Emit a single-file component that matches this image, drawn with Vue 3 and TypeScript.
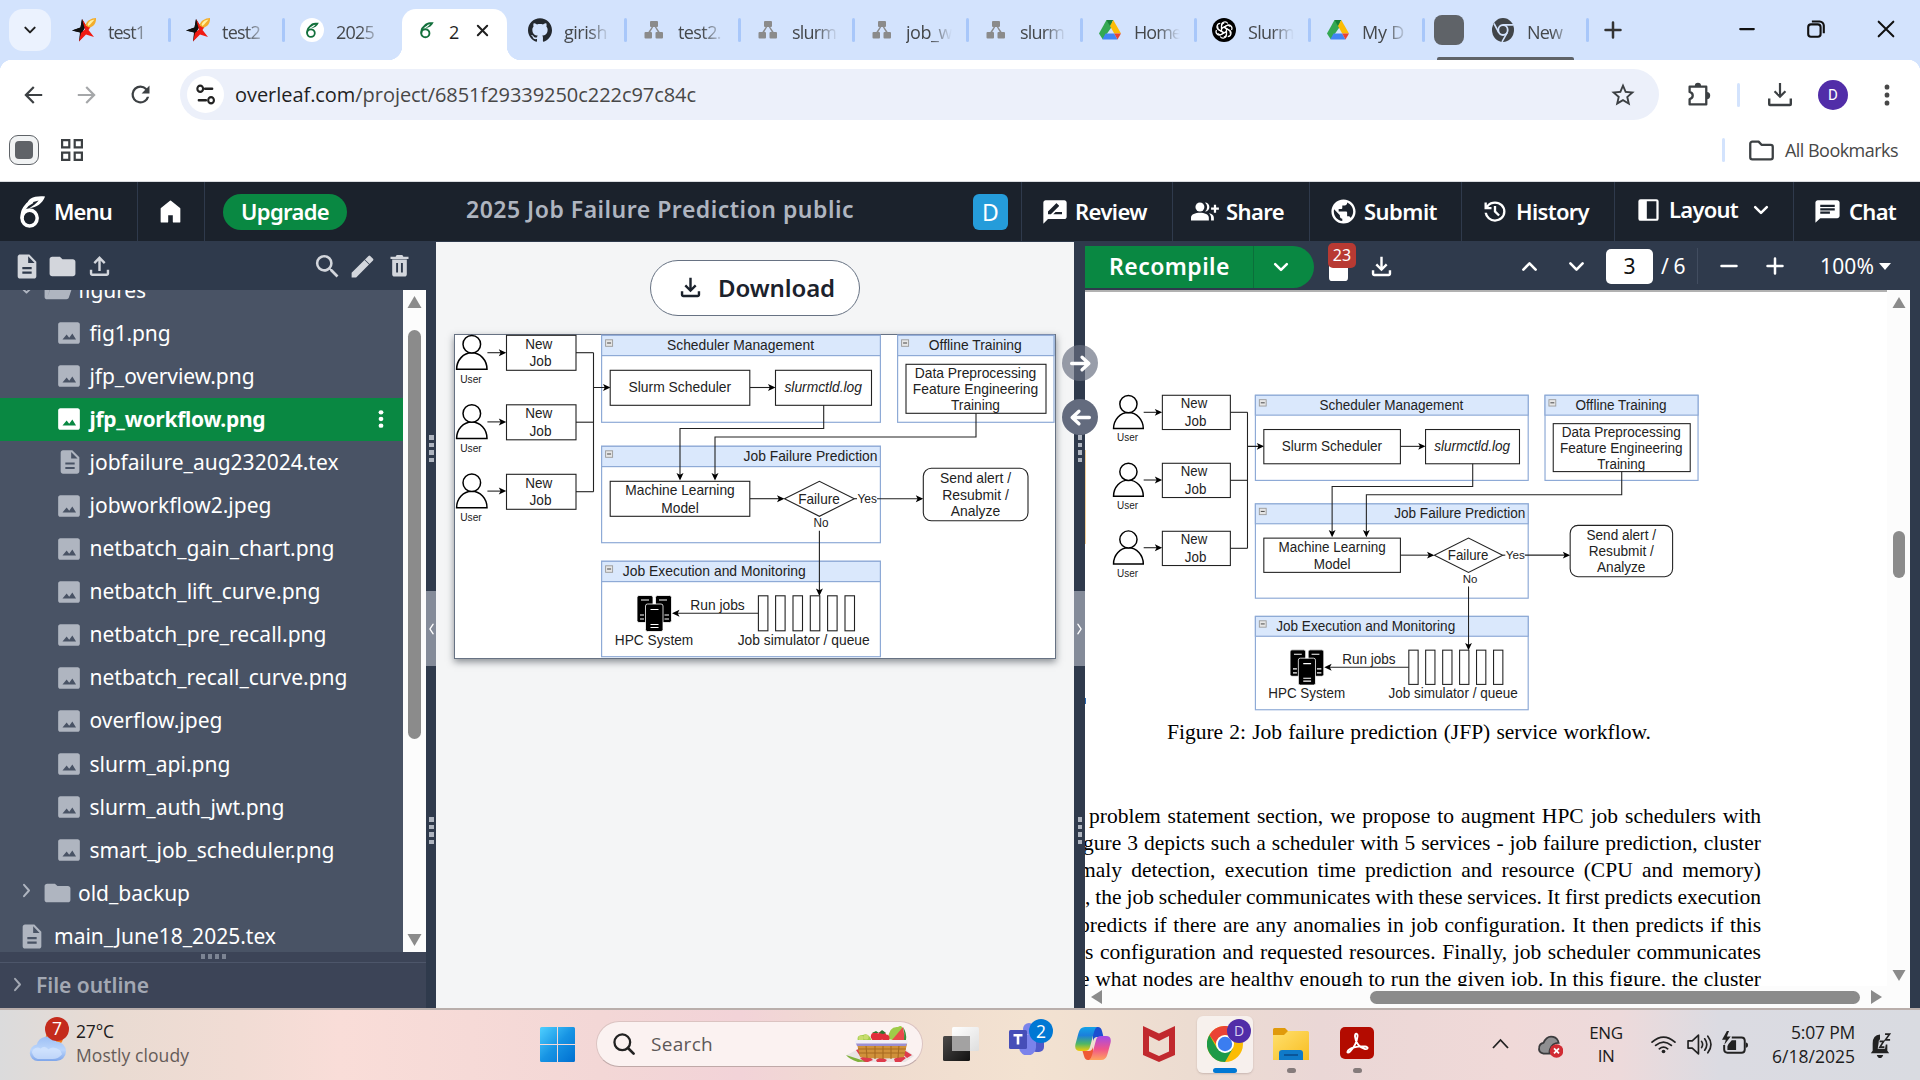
<script setup lang="ts">
import { h } from 'vue'
import type { Directive, FunctionalComponent } from 'vue'

/* Spreads the letters (or, with the argument "word", the words) of a label so that it fills the given width. */
const vFit: Directive<HTMLElement, number> = {
  mounted(el, binding) {
    const range = document.createRange()
    range.selectNodeContents(el)
    const natural = range.getBoundingClientRect().width
    const text = (el.textContent ?? '').trim()
    if (!natural || !text) return
    if (binding.arg === 'word') {
      const gaps = text.split(' ').length - 1
      if (gaps) el.style.wordSpacing = `${((binding.value - natural) / gaps).toFixed(3)}px`
    } else {
      el.style.letterSpacing = `${((binding.value - natural) / text.length).toFixed(3)}px`
    }
  },
}

const p = (d: string) => `<path fill="currentColor" fill-rule="evenodd" d="${d}"/>`
const s = (d: string, w = 2) =>
  `<path fill="none" stroke="currentColor" stroke-width="${w}" stroke-linecap="round" stroke-linejoin="round" d="${d}"/>`

const leaf =
  '<ellipse cx="10.2" cy="16.3" rx="5.7" ry="5.6" fill="none" stroke="currentColor" stroke-width="2.6"/>' +
  '<path fill="none" stroke="currentColor" stroke-width="2.6" d="M4.6 16.5C4.2 11 7.500 6.600 12.500 4.400"/>' +
  '<path fill="currentColor" d="M8.300 7.400C8.400 2.500 13.500.4 21.800 1.100C19.800 6 15.500 8.900 10 9.300C13 7.600 15.300 6 17 3.900C14.500 4.400 11.500 5.200 8.300 7.400Z"/>'

const icons: Record<string, string> = {
  chevDown: s('M5 8.500l7 7 7-7', 3),
  chevUp: s('M5 15.500l7-7 7 7', 3),
  chevRight: s('M8.500 4l7 8-7 8', 2.800),
  chevLeft: s('M15.500 4l-7 8 7 8', 2.800),
  back: p('M20.500 11H7.830l5.590-5.590L12 4l-8 8 8 8 1.410-1.410L7.830 13H20.500v-2z'),
  forward: p('M12 4l-1.410 1.410L16.170 11H3.500v2h12.670l-5.580 5.590L12 20l8-8z'),
  reload: p('M17.650 6.350A7.960 7.960 0 0 0 12 4a8 8 0 1 0 7.730 10h-2.080A6 6 0 1 1 12 6c1.660 0 3.140.69 4.220 1.780L13 11h7V4l-2.350 2.350z'),
  tune: s('M11.500 6.500H19M5 17.500h7.500', 2.400) + '<circle cx="6.500" cy="6.500" r="3" fill="none" stroke="currentColor" stroke-width="2.200"/><circle cx="17.800" cy="17.500" r="3" fill="none" stroke="currentColor" stroke-width="2.200"/>',
  star: p('M22 9.240l-7.190-.62L12 2 9.190 8.630 2 9.240l5.460 4.730L5.820 21 12 17.270 18.180 21l-1.630-7.030L22 9.240zM12 15.400l-3.760 2.270 1-4.280-3.320-2.880 4.380-.38L12 6.100l1.710 4.040 4.380.38-3.320 2.880 1 4.280L12 15.400z'),
  puzzle: '<path fill="none" stroke="currentColor" stroke-width="2.200" stroke-linejoin="round" d="M2.500 4.500H18.500V21.500H2.500V16.500C6.500 15.500 6.500 10.500 2.500 9.500Z"/><path fill="currentColor" d="M7.500 4a3 3.200 0 0 1 6 0zM19 9.500a3 3.200 0 0 1 0 7z"/>',
  download: p('M12 16l-5-5 1.400-1.450 2.600 2.600V4h2v8.150l2.600-2.600L17 11l-5 5Zm-6 4c-1.100 0-2-.9-2-2v-3h2v3h12v-3h2v3c0 1.100-.9 2-2 2H6Z'),
  downloadWide: p('M10.900 0h2.200v11l3.600-3.600 1.500 1.500L12 15.200 5.800 8.900l1.500-1.500 3.600 3.600ZM0 15.500h2.400v5.200h19.200v-5.200H24v5.700a2 2 0 0 1-2 2H2a2 2 0 0 1-2-2Z'),
  upload: p('M11 16V7.850l-2.600 2.600L7 9l5-5 5 5-1.400 1.450-2.600-2.600V16h-2ZM6 20c-1.100 0-2-.9-2-2v-3h2v3h12v-3h2v3c0 1.100-.9 2-2 2H6Z'),
  more: '<g fill="currentColor"><circle cx="12" cy="4" r="2.600"/><circle cx="12" cy="12" r="2.600"/><circle cx="12" cy="20" r="2.600"/></g>',
  grid: '<g fill="none" stroke="currentColor" stroke-width="2.200"><path d="M2.100 2.100h7.200v7.200H2.100zM14.700 2.100h7.200v7.200h-7.200zM2.100 14.700h7.200v7.200H2.100zM14.700 14.700h7.200v7.200h-7.200z"/></g>',
  folderLine: '<path fill="none" stroke="currentColor" stroke-width="2.200" stroke-linejoin="round" d="M1.200 5.500a2 2 0 0 1 2-2h6l2.800 3h8.800a2 2 0 0 1 2 2v10a2 2 0 0 1-2 2H3.200a2 2 0 0 1-2-2z"/>',
  leaf,
  home: '<path fill="currentColor" stroke="currentColor" stroke-width="1.500" stroke-linejoin="round" d="M4 21V9.500L12 3l8 6.500V21h-5.200v-6.500H9.200V21z"/>',
  review: p('M20 2H4c-1.100 0-2 .9-2 2v18l4-4h14c1.100 0 2-.9 2-2V4c0-1.100-.9-2-2-2zM6 14v-2.470l6.880-6.880c.2-.2.510-.2.710 0l1.770 1.770c.2.2.2.510 0 .710L8.470 14H6zm12 0h-7.500l2-2H18v2z'),
  share: '<g fill="currentColor"><circle cx="8" cy="8" r="4"/><path d="M0 20v-2.500C0 14.500 4 13.200 8 13.200s8 1.300 8 4.300V20zM12.500 12a5 5 0 0 0 0-8 4 4 0 1 1 0 8zM16 13.600c2.700.5 4.500 1.800 4.500 4V20H18v-2.500c0-1.500-.7-2.900-2-3.900z"/><path d="M20.500 6h2v2.500H25v2h-2.500V13h-2v-2.500H18v-2h2.500z"/></g>',
  globe: p('M12 2C6.480 2 2 6.480 2 12s4.480 10 10 10 10-4.480 10-10S17.520 2 12 2zm-1 17.930c-3.950-.49-7-3.850-7-7.930 0-.62.08-1.210.21-1.790L9 15v1c0 1.100.9 2 2 2v1.930zm6.900-2.540c-.26-.81-1-1.390-1.900-1.390h-1v-3c0-.55-.45-1-1-1H8v-2h2c.55 0 1-.45 1-1V7h2c1.100 0 2-.9 2-2v-.41c2.930 1.190 5 4.060 5 7.410 0 2.080-.8 3.970-2.100 5.390z'),
  history: p('M12 21q-3.450 0-6.012-2.287T3.050 13H5.100q.35 2.600 2.313 4.300T12 19q2.925 0 4.963-2.037T19 12t-2.037-4.962T12 5q-1.725 0-3.225.8T6.250 8H9v2H3V4h2v2.350q1.275-1.600 3.113-2.475T12 3q1.875 0 3.513.713t2.850 1.924 1.925 2.850T21 12t-.712 3.513-1.925 2.850-2.850 1.925T12 21m2.800-4.800L11 12.400V7h2v4.600l3.200 3.200z'),
  layout: p('M5 2h14a2 2 0 0 1 2 2v16a2 2 0 0 1-2 2H5a2 2 0 0 1-2-2V4a2 2 0 0 1 2-2zM10.500 4v16h8.500V4z'),
  chat: p('M20 2H4c-1.100 0-1.990.9-1.990 2L2 22l4-4h14c1.100 0 2-.9 2-2V4c0-1.100-.9-2-2-2zM6 9h12v2H6V9zm8 5H6v-2h8v2zm4-6H6V6h12v2z'),
  file: p('M14 2H6c-1.100 0-2 .9-2 2v16c0 1.100.9 2 2 2h12c1.100 0 2-.9 2-2V8l-6-6zm2 16H8v-1.800h8V18zm0-3.800H8v-1.800h8v1.800zM13 9V3.500L18.500 9H13z'),
  folder: p('M10 4H4c-1.100 0-2 .9-2 2v12c0 1.100.9 2 2 2h16c1.100 0 2-.9 2-2V8c0-1.100-.9-2-2-2h-8l-2-2z'),
  folderOpen: p('M4 20c-1.100 0-2-.9-2-2V6c0-1.100.9-2 2-2h6l2 2h8c1.100 0 2 .9 2 2H7.500L4 18.500 6.800 9.500h16.700l-2.700 9c-.3.900-.9 1.500-1.900 1.500z'),
  search: p('M15.500 14h-.79l-.28-.27A6.470 6.470 0 0 0 16 9.500 6.500 6.500 0 1 0 9.500 16c1.610 0 3.090-.59 4.230-1.570l.27.28v.79l5 4.990L20.490 19l-4.990-5zm-6 0C7.010 14 5 11.990 5 9.500S7.010 5 9.500 5 14 7.010 14 9.500 11.990 14 9.500 14z'),
  edit: p('M3 17.250V21h3.750L17.810 9.940l-3.750-3.750L3 17.250zM20.710 7.040a1 1 0 0 0 0-1.410l-2.340-2.340a1 1 0 0 0-1.410 0l-3.300 3.300 3.750 3.750z'),
  trash: p('M5.500 19c0 1.100.9 2 2 2h9c1.100 0 2-.9 2-2V6.500h-13zM20 4h-4.500l-1-1.500h-5L8.500 4H4v2h16zM9 9.500h1.700v8H9zM13.300 9.500H15v8h-1.700z'),
  image: p('M22 20V4c0-1.100-.9-2-2-2H4c-1.100 0-2 .9-2 2v16c0 1.100.9 2 2 2h16c1.100 0 2-.9 2-2zM6 18l3.800-4.700 2.400 3 2.900-3.900L18.500 18z'),
  minus: s('M3 12h18', 3),
  plus: s('M3 12h18M12 3v18', 3),
  close: s('M4.500 4.500l15 15M19.500 4.500l-15 15', 3.200),
  winClose: s('M4 4l16 16M20 4L4 20', 2.200),
  restore: '<g fill="none" stroke="currentColor" stroke-width="2.300"><rect x="3.500" y="7" width="13.500" height="13.500" rx="3"/><path d="M7.500 3.800h8.500a4.500 4.500 0 0 1 4.500 4.500v8.200"/></g>',
  circleArrowR: s('M3.500 12H20M13.500 6l6.500 6-6.500 6', 3.200),
  circleArrowL: s('M20.500 12H4M10.500 6L4 12l6.500 6', 3.200),
  latex: '<path fill="#111" d="M0 12.500 8.500 9.500 10 1l4.500 7.500L11 12l1 5-5 6.500 1-9z"/><path fill="#f01a12" d="M10 1l4.500 7L21 5l-4.500 7 5.500 7-8-2.500-7 7 2-9 4-3z"/><path fill="#111" d="M0 12.500l8.500-3L10 1l2 10.500-3.500 4L7 23.500l1.500-9z"/><path fill="#f3ad2b" d="M13.500 7.500C15 2 19 .5 24 0c.3 4-1.500 8.500-7 9.500z"/><path fill="#fff0a0" d="M15.500 6.500C17 3.200 19.500 2 22.500 1.600 20.500 4 19 6 16.500 8z"/>',
  leafCircle: `<circle cx="12" cy="12" r="12" fill="#fff"/><g color="#13703c" transform="translate(4 4) scale(.68)">${leaf}</g>`,
  leafTab: `<g color="#13703c" transform="translate(4 3.500) scale(.72)">${leaf}</g>`,
  github: '<path fill="#24292f" d="M12 .297c-6.630 0-12 5.373-12 12 0 5.303 3.438 9.800 8.205 11.385.6.113.82-.258.82-.577 0-.285-.01-1.040-.015-2.040-3.338.724-4.042-1.610-4.042-1.610C4.422 18.070 3.633 17.700 3.633 17.700c-1.087-.744.084-.729.084-.729 1.205.084 1.838 1.236 1.838 1.236 1.070 1.835 2.809 1.305 3.495.998.108-.776.417-1.305.76-1.605-2.665-.3-5.466-1.332-5.466-5.930 0-1.310.465-2.380 1.235-3.220-.135-.303-.54-1.523.105-3.176 0 0 1.005-.322 3.300 1.230.96-.267 1.980-.399 3-.405 1.020.006 2.040.138 3 .405 2.280-1.552 3.285-1.230 3.285-1.230.645 1.653.24 2.873.12 3.176.765.84 1.230 1.910 1.230 3.220 0 4.610-2.805 5.625-5.475 5.920.42.36.81 1.096.81 2.220 0 1.606-.015 2.896-.015 3.286 0 .315.21.69.825.57C20.565 22.092 24 17.592 24 12.297c0-6.627-5.373-12-12-12"/>',
  nodes: '<g fill="#8b8b8b"><rect x="8" y="3" width="8" height="6" rx="1"/><rect x="2.500" y="14" width="7.500" height="6.500" rx="1"/><rect x="13.500" y="14" width="7.500" height="6.500" rx="1"/><path d="M9.700 9h1.500L8 14.500H6zM12.800 9h1.500l3.700 5.500h-2z"/></g>',
  drive: '<path fill="#34a853" d="M8.500 2h4l2.800 4.700L4.800 21.400 1 15.500z"/><path fill="#188038" d="M8.500 2h6.800L12 8z"/><path fill="#fbbc04" d="M15.300 2 23 15.500h-6.800L12 8z"/><path fill="#4285f4" d="M7.600 15.500h8.600l3.300 6.100H5.100L4.500 21z"/><path fill="#ea4335" d="M16.200 15.500H23l-3.500 6.100z"/>',
  gpt: '<circle cx="12" cy="12" r="12" fill="#000"/><g fill="none" stroke="#fff" stroke-width="1.200">' +
    [0, 60, 120, 180, 240, 300].map((a) => `<path transform="rotate(${a} 12 12)" d="M9.500 12.800V7.200a3.400 3.400 0 0 1 6.300-1.700M9.500 10.600l4.800-2.800a3.300 3.300 0 0 1 4 .8"/>`).join('') + '</g>',
  chromeGray: '<circle cx="12" cy="12" r="11" fill="#414549"/><circle cx="12" cy="12" r="4.700" fill="none" stroke="#d3e3fd" stroke-width="1.800"/><path fill="none" stroke="#d3e3fd" stroke-width="1.600" d="M12 7.200h10M7.800 14.400 3 6M16.200 14.400 11 23"/>',
  logs: p('M3 0h18a3 3 0 0 1 3 3v18a3 3 0 0 1-3 3H3a3 3 0 0 1-3-3V3a3 3 0 0 1 3-3zM6 4v9h12V4z'),
  weather: '<defs><linearGradient id="cl" x1="0" y1="0" x2="0" y2="1"><stop offset="0" stop-color="#9dbff5"/><stop offset=".55" stop-color="#bcd6fb"/><stop offset="1" stop-color="#7ea5ea"/></linearGradient></defs><circle cx="26" cy="12" r="9" fill="#f47b1c"/><path fill="url(#cl)" d="M9 36a8.500 8.500 0 0 1-1-16.900A11 11 0 0 1 28 16a10 10 0 0 1 0 20z"/><path fill="#d5e5fd" opacity=".7" d="M3 27a6 6 0 0 1 9-4q4-4 8 1 5-4 12 1l2 4q-4 5-10 5H9q-5-2-6-7z"/>',
  win: '<defs><linearGradient id="wg" x1="0" y1="0" x2="1" y2="1"><stop offset="0" stop-color="#4fd0ff"/><stop offset=".5" stop-color="#1794e4"/><stop offset="1" stop-color="#006fd0"/></linearGradient></defs><path fill="url(#wg)" d="M1.500 0H17v17H0V1.500A1.500 1.500 0 0 1 1.500 0zM18 0h15.500A1.500 1.500 0 0 1 35 1.500V17H18zM0 18h17v17H1.500A1.500 1.500 0 0 1 0 33.500zM18 18h17v15.500a1.500 1.500 0 0 1-1.500 1.500H18z"/>',
  lens: '<circle cx="9.700" cy="9.700" r="8.200" fill="none" stroke="#222" stroke-width="2.400"/><path d="M15.600 15.600 21.500 21.500" stroke="#222" stroke-width="2.800" stroke-linecap="round"/>',
  basket: '<path fill="#e9e4e4" d="M1 29 14 22h44l10 8-9 6H12z"/><path fill="#de3b4c" d="M10 24l6-2 4 5-6 3zM14 32l8-3 5 5-5 2H18zM58 24l8 5-5 3-6-5zM48 33l7-4 5 3-5 4h-6zM30 34l5-3 6 3-2 2h-8z"/><path fill="#7fb13c" d="M0 29l20 6.500-8 .5Q3 33 0 29z"/><path fill="#d0913a" d="M11 18h50l-3 13q-22 3-44 0z"/><path fill="none" stroke="#a66a20" stroke-width="1.100" d="M12 23h48M13 27h46M20 19l1 13M29 19v14M37 19v14M45 19v14M53 19l-1 13"/><path fill="#9fcb48" d="M12 15Q10 9 17 9q4-2 7 2l2 4zM42 13Q43 0 52 1q4-3 5 3l-4 11z"/><g fill="#c8dc6e"><circle cx="15" cy="12" r="2.600"/><circle cx="20" cy="11" r="2.600"/></g><g fill="#e0303b"><circle cx="29" cy="10.500" r="4.200"/><circle cx="36" cy="9.500" r="4.200"/><circle cx="40" cy="12" r="3.500"/><circle cx="32" cy="13" r="3.500"/></g><path fill="#2c7a32" d="M26 7l4-2 3 2 3-3 4 3-3 1-4-1z"/><path fill="#e84a4a" d="M46 14 57 1l2 13z"/><path fill="#3d8f3a" d="M57 1q4 6 3 13h-2q1-7-1-13z"/><rect x="9" y="14" width="53" height="4" rx="1.500" fill="#f1eff5"/><path fill="#9c8fd1" d="M10 17.500h51l-1 2.500H11z"/>',
  taskView: '<defs><linearGradient id="tk" x1="0" y1="0" x2="1" y2="1"><stop offset="0" stop-color="#4c4a49"/><stop offset="1" stop-color="#111"/></linearGradient><linearGradient id="tw" x1="0" y1="0" x2="1" y2="1"><stop offset="0" stop-color="#fff"/><stop offset="1" stop-color="#dedede"/></linearGradient></defs><rect y="9" width="27" height="25" rx="1.500" fill="url(#tk)"/><rect x="9" width="27" height="24" rx="1.500" fill="url(#tw)"/><path fill="#a3a2a2" d="M9 9h18v15H9z"/>',
  teams: '<circle cx="20" cy="6" r="6" fill="#7b83eb"/><rect x="22" y="11" width="13" height="18" rx="5" fill="#5059c9"/><path fill="#7b83eb" d="M9 12h18v11a8.500 8.500 0 0 1-17 2z"/><rect y="7" width="18" height="19" rx="1.500" fill="#464eb8"/><path stroke="#fff" stroke-width="2.600" fill="none" d="M4.500 12.200h9M9 12.200v9.300"/>',
  copilot: '<defs><linearGradient id="c1" x1="0" y1="0" x2="0" y2="1"><stop offset="0" stop-color="#13a3e8"/><stop offset=".35" stop-color="#1b7fdb"/><stop offset=".7" stop-color="#4fb765"/><stop offset="1" stop-color="#f2cb08"/></linearGradient><linearGradient id="c2" x1="0" y1="0" x2="0" y2="1"><stop offset="0" stop-color="#a34be8"/><stop offset=".55" stop-color="#f0558a"/><stop offset="1" stop-color="#ffa45e"/></linearGradient></defs><path fill="#1c4fd0" d="M18 0h5q3 0 4 4l1.500 6H22q-3 0-4 4z"/><path fill="#ef5a35" d="M18 33h-5q-3 0-4-4l-1.500-5H14q3 0 4-4z"/><path fill="url(#c1)" d="M10 0h12q-2 1-3 5l-4 15q-1 4-5 4H5q-6 0-4.500-7l3-11Q5 0 10 0z"/><path fill="url(#c2)" d="M26 33H14q2-1 3-5l4-15q1-4 5-4h5q6 0 4.500 7l-3 11Q31 33 26 33z"/>',
  mcafee: '<path fill="#c1292e" fill-rule="evenodd" d="M0 0 16 7.500 32 0v29L16 36 0 29zM6 10v15.500l10 4.500 10-4.500V10l-10 5z"/>',
  chrome: '<circle cx="18" cy="18" r="18" fill="#fbbc04"/><path fill="#ea4335" d="M2.400 9A18 18 0 0 1 33.600 9H18q-8 1-9 9z"/><path fill="#1e9a48" d="M2.400 9 10.200 22.500 18 27l7.800-4.500L18 36A18 18 0 0 1 2.400 9z"/><circle cx="18" cy="18" r="9" fill="#fff"/><circle cx="18" cy="18" r="7.200" fill="#3b7df0"/>',
  explorer: '<defs><linearGradient id="ex" x1="0" y1="0" x2="1" y2="1"><stop offset="0" stop-color="#ffe06d"/><stop offset="1" stop-color="#f8bd22"/></linearGradient></defs><path fill="#e09a0b" d="M0 1.500A1.500 1.500 0 0 1 1.500 0H12l3 3v5H0z"/><path fill="url(#ex)" d="M0 7h11l4-4h19.500A1.500 1.500 0 0 1 36 4.500V32H0z"/><path fill="#0f7ac8" d="M6 32v-7q0-3 3-3h18q3 0 3 3v7z"/><path stroke="#0a4c8c" stroke-width="1.600" d="M11 27h14"/>',
  acrobat: '<rect width="34" height="32" rx="5" fill="#b30b00"/><path fill="none" stroke="#fff" stroke-width="1.900" stroke-linejoin="round" d="M7.500 24.500C9 20.500 18 19 25 19.500c4 .5 3 3 0 2.500-5-1-9.500-6-10-12.500-.2-4 3-3.500 2.500 0-.6 5-4 11.500-7.500 15-1.500 1.400-3 1.200-2.500 0z"/>',
  oneDrive: '<path fill="#8f8f91" stroke="#3b3b3d" stroke-width="1.600" d="M6 20q-5-1-4-6 .6-3.500 4-4Q9 3 15 4.500q4 1 5 5.500-6 0-8 6-1 3 0 4z"/><circle cx="18" cy="17.500" r="6.300" fill="#d12b33"/><path stroke="#fff" stroke-width="1.600" d="M15.700 15.200l4.600 4.600M20.300 15.200l-4.600 4.600"/>',
  wifi: '<g fill="none" stroke="#222" stroke-width="1.700" stroke-linecap="round"><path d="M1 9.500Q12-1 23 9.500M4.500 13Q12 6 19.500 13M8 16.500Q12 13 16 16.500"/></g><circle cx="12" cy="19.300" r="1.800" fill="#222"/>',
  volume: '<g fill="none" stroke="#222" stroke-width="1.600" stroke-linejoin="round" stroke-linecap="round"><path d="M1 8.500h4L11 3v18l-6-5.500H1z"/><path d="M14 9q2 3 0 6M17 6.500q4 5.500 0 11M20 4q6 8 0 16"/></g>',
  battery: '<g fill="none" stroke="#222" stroke-width="1.800"><path d="M9 6h9q3 0 3 3v8q0 3-3 3H5q-3 0-3-3v-4"/></g><path fill="#222" d="M22 10.500q2 0 2 2.500t-2 2.500zM6 12l3-3.500h4v9H5V14zM4.500 0 0 8h3.500L2 13l6-8H4.500L6.500 0z"/>',
  bell: '<path fill="#222" d="M4 17V10q0-8 8-8.500v4.500q-2 1-1.500 3.500L9.500 15h8l.8-4H20v6l2 2.500H2zM8.500 21h7q-1 3-3.500 3t-3.500-3z"/><path fill="none" stroke="#222" stroke-width="1.700" d="M11.500 8h4.500l-4 5.500h4.800M17.500 1h5l-4.500 5.500h5"/>',
}

const Ico: FunctionalComponent<{ n: string; w: number; ht?: number | string; vb?: string }> = (props) =>
  h('svg', { viewBox: props.vb ?? '0 0 24 24', width: props.w, height: props.ht ?? props.w, preserveAspectRatio: 'none', innerHTML: icons[props.n] })
Ico.props = ['n', 'w', 'ht', 'vb']

const tabs = [
  { icon: 'latex', text: 'test1', w: 37 },
  { icon: 'latex', text: 'test2', w: 38 },
  { icon: 'leafCircle', text: '2025', w: 38 },
  { icon: 'leafTab', text: '2', w: 9, active: true },
  { icon: 'github', text: 'girish', w: 43 },
  { icon: 'nodes', text: 'test2.', w: 43 },
  { icon: 'nodes', text: 'slurm', w: 44 },
  { icon: 'nodes', text: 'job_w', w: 46 },
  { icon: 'nodes', text: 'slurm', w: 44 },
  { icon: 'drive', text: 'Home', w: 47 },
  { icon: 'gpt', text: 'Slurm', w: 46 },
  { icon: 'drive', text: 'My D', w: 42 },
]

const actions = [
  { icon: 'review', text: 'Review', w: 72, cell: 151, pad: 19, iw: 28, ih: 28, gap: 6 },
  { icon: 'share', text: 'Share', w: 58, cell: 137, pad: 18, iw: 29, ih: 27, gap: 6, vb: '0 0 26 24' },
  { icon: 'globe', text: 'Submit', w: 73, cell: 152, pad: 19, iw: 29, ih: 29, gap: 6 },
  { icon: 'history', text: 'History', w: 73, cell: 153, pad: 19, iw: 28, ih: 27, gap: 7 },
  { icon: 'layout', text: 'Layout', w: 69, cell: 179, pad: 20, iw: 27, ih: 26, gap: 7, chevron: true },
  { icon: 'chat', text: 'Chat', w: 47, cell: 127, pad: 19, iw: 29, ih: 27, gap: 7 },
]

const files = [
  { icon: 'image', text: 'fig1.png', w: 81 },
  { icon: 'image', text: 'jfp_overview.png', w: 165 },
  { icon: 'image', text: 'jfp_workflow.png', w: 176, selected: true },
  { icon: 'file', text: 'jobfailure_aug232024.tex', w: 249 },
  { icon: 'image', text: 'jobworkflow2.jpeg', w: 182 },
  { icon: 'image', text: 'netbatch_gain_chart.png', w: 245 },
  { icon: 'image', text: 'netbatch_lift_curve.png', w: 231 },
  { icon: 'image', text: 'netbatch_pre_recall.png', w: 237 },
  { icon: 'image', text: 'netbatch_recall_curve.png', w: 258 },
  { icon: 'image', text: 'overflow.jpeg', w: 133 },
  { icon: 'image', text: 'slurm_api.png', w: 141 },
  { icon: 'image', text: 'slurm_auth_jwt.png', w: 195 },
  { icon: 'image', text: 'smart_job_scheduler.png', w: 245 },
]

const paper = [
  { text: 'problem statement section, we propose to augment HPC job schedulers with', w: 672 },
  { text: 'gure 3 depicts such a scheduler with 5 services - job failure prediction, cluster', w: 678 },
  { text: 'maly detection, execution time prediction and resource (CPU and memory)', w: 682 },
  { text: ', the job scheduler communicates with these services. It first predicts execution', w: 676 },
  { text: 'predicts if there are any anomalies in job configuration. It then predicts if this', w: 682 },
  { text: 's configuration and requested resources. Finally, job scheduler communicates', w: 676 },
  { text: 'e what nodes are healthy enough to run the given job. In this figure, the cluster', w: 681 },
]

/* Workflow figure: built once, drawn in the preview and in the PDF page. */
const box = (x: number, y: number, w: number, ht: number, r = 0) =>
  `<rect x="${x}" y="${y}" width="${w}" height="${ht}" rx="${r}" fill="#fff" stroke="#222" stroke-width="1.100"/>`
const group = (x: number, y: number, w: number, ht: number) =>
  `<rect x="${x}" y="${y}" width="${w}" height="${ht}" fill="#fff" stroke="#8eaad6" stroke-width="1.200"/>` +
  `<rect x="${x}" y="${y}" width="${w}" height="20.300" fill="#dae8fc" stroke="#8eaad6" stroke-width="1.200"/>` +
  `<rect x="${x + 4}" y="${y + 4.5}" width="7" height="6.500" fill="#e6e6e6" stroke="#999" stroke-width=".9"/>` +
  `<path d="M${x + 5.5} ${y + 7.7}h4" stroke="#444" stroke-width="1"/>`
const label = (t: string, cx: number, y: number, len: number, size = 14.6, extra = '') =>
  `<text x="${cx - len / 2}" y="${y}" font-size="${size}" textLength="${len}" lengthAdjust="spacingAndGlyphs" ${extra}>${t}</text>`
const line = (d: string) => `<path d="${d}" fill="none" stroke="#222" stroke-width="1.100"/>`
const head = (x: number, y: number, a: number) =>
  `<path transform="translate(${x} ${y}) rotate(${a})" d="M0 0l-7.500-3.500 1.800 3.500-1.800 3.500z" fill="#000"/>`

const figure = [
  group(147.6, 1.3, 278.8, 87), group(443.6, 1.3, 156.4, 87), group(147.6, 112.3, 278.8, 96.4), group(147.6, 227.3, 278.8, 95.4),
  ...[0, 1, 2].map((i) => {
    const u = i * 69.2
    const b = i * 69.5
    return `<g fill="#fff" stroke="#000" stroke-width="1.500"><path d="M2.600 ${35.3 + u}a15.200 16.500 0 0 1 30.400 0z"/><ellipse cx="17.800" cy="${10.3 + u}" rx="8.800" ry="8.800"/></g>` +
      label('User', 17, 48.5 + u, 21.5, 10.8) + line(`M33.400 ${18.7 + u}H48`) + head(52.3, 18.7 + u, 0) + box(52.5, 1.3 + b, 69.5, 35) +
      label('New', 84.8, 14.7 + b, 27) + label('Job', 86.5, 32.3 + b, 22) + line(`M122 ${18.7 + b}H139.500`)
  }),
  line('M139.500 18.700V157.700M139.500 53.500H152'), head(156.5, 53.5, 0),
  label('Scheduler Management', 286.5, 16.3, 147), label('Offline Training', 521.3, 16.3, 93),
  box(156.2, 36.3, 139.6, 35), label('Slurm Scheduler', 225.8, 58.3, 102.5), line('M296 53.500H317'), head(321.5, 53.5, 0),
  box(321.5, 36.3, 96, 35), label('slurmctld.log', 369.2, 58.3, 77.5, 14.6, 'font-style="italic"'),
  box(452, 30.3, 140, 49), label('Data Preprocessing', 521.5, 43.8, 121.6), label('Feature Engineering', 521.5, 60, 125.4), label('Training', 521.5, 76.2, 49),
  line('M369.700 71.300V94.500H226V141'), head(226, 146.5, 90), line('M522 79.300V103H261V141'), head(261, 146.5, 90),
  label('Job Failure Prediction', 356.5, 127.2, 134),
  box(156.2, 147.3, 139.6, 35), label('Machine Learning', 226, 161.2, 109.5), label('Model', 226, 178.5, 37.5),
  line('M296 164.700H326'), head(330.5, 164.7, 0), '<path d="M330.500 164.700 365.400 147.300 400.300 164.700 365.400 182.300Z" fill="#fff" stroke="#222" stroke-width="1.100"/>',
  label('Failure', 365, 169.6, 41.5), line('M400.300 164.700H403'), label('Yes', 413.2, 168.6, 19.5, 12), line('M423 164.700H465'), head(469.3, 164.7, 0),
  box(469.3, 134.3, 104.7, 52.4, 8), label('Send alert /', 521.5, 149.2, 71), label('Resubmit /', 521.5, 165.5, 66.5), label('Analyze', 521.5, 182, 49.5),
  label('No', 367, 193, 15, 12), line('M365.400 196.700V257'), head(365.4, 262, 90),
  label('Job Execution and Monitoring', 260.3, 242.2, 183),
  '<g fill="#000" stroke="#fff" stroke-width=".8"><rect x="183" y="261.500" width="16" height="27" rx="2"/><rect x="201.500" y="261.500" width="16" height="27" rx="2"/><rect x="191.500" y="270" width="17.500" height="27.500" rx="2"/></g>',
  '<path d="M187 266h8M205 266h8M186 281h4M186 285h4M210.500 281h4.500M210.500 285h4.500M196.500 275.500h8M196.500 290.500h8M196.500 293.500h8" stroke="#fff" stroke-width="1.200"/>',
  label('Run jobs', 263.5, 276, 54.5), line('M304.400 279.300H223'), head(218, 279.3, 180),
  ...[304.4, 321.6, 339, 356.3, 373.6, 391].map((x) => box(x, 261.8, 9.5, 35)),
  label('HPC System', 200, 311, 78.5), label('Job simulator / queue', 349.7, 311, 132),
].join('')
</script>

<template>
  <div class="screen">
    <header class="tabstrip">
      <div class="tabsearch"><Ico n="chevDown" :w="16" /></div>
      <div v-for="(t, i) in tabs" :key="i" class="tab" :class="{ active: t.active, nosep: i === 2 }">
        <Ico :n="t.icon" :w="24" class="fav" />
        <span class="tabname"><span v-fit="t.w">{{ t.text }}</span></span>
        <Ico v-if="t.active" n="close" :w="15" class="tabclose" />
      </div>
      <div class="tabgroup">
        <div class="groupchip"></div>
        <div class="tab newtab">
          <Ico n="chromeGray" :w="24" ht="26" class="fav" />
          <span class="tabname"><span v-fit="35">New</span></span>
        </div>
      </div>
      <Ico n="plus" :w="20" class="addtab" />
      <div class="wincontrols">
        <Ico n="minus" :w="18" /><Ico n="restore" :w="22" /><Ico n="winClose" :w="22" />
      </div>
    </header>

    <div class="chrome">
      <div class="navrow">
        <Ico n="back" :w="26" /><Ico n="forward" :w="26" class="dim" /><Ico n="reload" :w="27" class="reload" />
        <div class="omnibox">
          <div class="siteinfo"><Ico n="tune" :w="23" ht="25" /></div>
          <span class="url"><span v-fit="461"><b>overleaf.com</b>/project/6851f29339250c222c97c84c</span></span>
          <Ico n="star" :w="28" class="bookstar" />
        </div>
        <Ico n="puzzle" :w="25" class="ext" />
        <i class="vsep"></i>
        <Ico n="downloadWide" :w="24" class="dl" />
        <div class="profile">D</div>
        <Ico n="more" :w="22" ht="24" class="kebab" />
      </div>
      <div class="bookrow">
        <div class="bookchip"><i></i></div>
        <Ico n="grid" :w="24" class="gridicon" />
        <i class="vsep bsep"></i>
        <Ico n="folderLine" :w="25" />
        <span v-fit="113" class="allbm">All Bookmarks</span>
      </div>
    </div>

    <nav class="topbar">
      <div class="cell menu"><Ico n="leaf" :w="32" ht="34" /><span v-fit="58">Menu</span></div>
      <div class="cell homecell"><Ico n="home" :w="27" /></div>
      <div class="upgrade"><span v-fit="88">Upgrade</span></div>
      <div class="title"><span v-fit="388">2025 Job Failure Prediction public</span></div>
      <div class="user">D</div>
      <div v-for="a in actions" :key="a.text" class="cell action" :class="{ raised: a.chevron }" :style="{ width: a.cell + 'px', paddingLeft: a.pad + 'px' }">
        <Ico :n="a.icon" :w="a.iw" :ht="a.ih" :vb="a.vb" />
        <span v-fit="a.w" :style="{ marginLeft: a.gap + 'px' }">{{ a.text }}</span>
        <Ico v-if="a.chevron" n="chevDown" :w="20" class="laychev" />
      </div>
    </nav>

    <main class="workspace">
      <aside class="sidebar">
        <div class="treebar">
          <Ico n="file" :w="28" ht="29" /><Ico n="folder" :w="31" ht="29" /><Ico n="upload" :w="29" ht="30" class="up" />
          <span class="grow"></span>
          <Ico n="search" :w="31" /><Ico n="edit" :w="29" class="pen" /><Ico n="trash" :w="27" ht="28" class="bin" />
        </div>
        <div class="treewrap">
          <div class="tree">
            <div class="row folderrow"><Ico n="chevDown" :w="15" class="twist" /><Ico n="folderOpen" :w="31" ht="28" class="gray" /><span v-fit="68" class="fname">figures</span></div>
            <div v-for="f in files" :key="f.text" class="row filerow" :class="{ selected: f.selected }">
              <Ico :n="f.icon" :w="f.icon === 'file' ? 28 : 26" class="gray" :class="{ fileic: f.icon === 'file' }" />
              <span v-fit="f.w" class="fname">{{ f.text }}</span>
              <Ico v-if="f.selected" n="more" :w="22" ht="20" class="rowmore" />
            </div>
            <div class="row folderrow"><Ico n="chevRight" :w="17" class="twist right" /><Ico n="folder" :w="31" ht="28" class="gray" /><span v-fit="112" class="fname">old_backup</span></div>
            <div class="row rootrow"><Ico n="file" :w="28" ht="29" class="gray" /><span v-fit="222" class="fname">main_June18_2025.tex</span></div>
          </div>
          <div class="vscroll">
            <svg width="15" height="12"><path d="M7.500 0 14.500 12H.5z" fill="#8b8b8b" /></svg>
            <div class="thumb"></div>
            <svg width="15" height="12"><path d="M7.500 12 14.500 0H.5z" fill="#8b8b8b" /></svg>
          </div>
        </div>
        <div class="hgrip"><i v-for="n in 4" :key="n"></i></div>
        <div class="outline"><Ico n="chevRight" :w="17" /><span v-fit="113">File outline</span></div>
      </aside>

      <div class="resizer left">
        <div class="grip"><i v-for="n in 4" :key="n"></i></div>
        <div class="collapse"><Ico n="chevLeft" :w="11" ht="14" /></div>
        <div class="grip"><i v-for="n in 4" :key="n"></i></div>
      </div>

      <section class="preview">
        <button class="download"><Ico n="download" :w="29" /><span v-fit="117">Download</span></button>
        <div class="picture"><svg class="figure" viewBox="0 0 602 325" width="602" height="325" v-html="figure"></svg></div>
      </section>

      <div class="resizer mid">
        <div class="sync first"><Ico n="circleArrowR" :w="25" /></div>
        <div class="sync second"><Ico n="circleArrowL" :w="25" /></div>
        <div class="grip"><i v-for="n in 4" :key="n"></i></div>
        <div class="collapse"><Ico n="chevRight" :w="11" ht="14" /></div>
        <div class="grip"><i v-for="n in 4" :key="n"></i></div>
      </div>

      <section class="pdf">
        <div class="pdfbar">
          <div class="recompile"><span class="rc"><span v-fit="121">Recompile</span></span><span class="rcmenu"><Ico n="chevDown" :w="20" /></span></div>
          <div class="logs"><Ico n="logs" :w="19" ht="30" /><span class="badge">23</span></div>
          <Ico n="download" :w="29" class="pdfdl" />
          <Ico n="chevUp" :w="21" class="pgup" /><Ico n="chevDown" :w="21" class="pgdown" />
          <div class="pagebox">3</div>
          <span v-fit="24" class="pages">/ 6</span>
          <i class="pdfsep"></i>
          <Ico n="minus" :w="20" class="zout" /><Ico n="plus" :w="20" class="zin" />
          <span class="zoom"><span v-fit="54">100%</span></span>
          <svg class="caret" width="12" height="7"><path d="M0 0h12L6 7z" fill="#fff" /></svg>
        </div>
        <div class="pdfbody">
          <div class="page">
            <i class="edge orange"></i><i class="edge blue"></i>
            <svg class="figure pagefig" viewBox="0 0 602 325" width="589" height="318" v-html="figure"></svg>
            <p class="caption"><span v-fit:word="484">Figure 2: Job failure prediction (JFP) service workflow.</span></p>
            <div class="para"><p v-for="l in paper" :key="l.text"><span v-fit:word="l.w">{{ l.text }}</span></p></div>
          </div>
          <div class="vscroll pv">
            <svg width="14" height="11"><path d="M7 0 13.500 11H.5z" fill="#8b8b8b" /></svg>
            <div class="thumb"></div>
            <svg width="14" height="11"><path d="M7 11 13.500 0H.5z" fill="#8b8b8b" /></svg>
          </div>
        </div>
        <div class="hscroll">
          <svg width="11" height="14"><path d="M0 7 11 0v14z" fill="#8b8b8b" /></svg>
          <div class="hthumb"></div>
          <svg width="11" height="14"><path d="M11 7 0 0v14z" fill="#8b8b8b" /></svg>
        </div>
      </section>
    </main>

    <footer class="taskbar">
      <div class="weather">
        <div class="wicon"><Ico n="weather" :w="37" ht="36" vb="0 0 38 37" /><span class="wbadge">7</span></div>
        <div class="wtext"><span v-fit="38">27°C</span><span v-fit="113" class="soft">Mostly cloudy</span></div>
      </div>
      <Ico n="win" :w="35" vb="0 0 35 35" class="start" />
      <div class="search"><Ico n="lens" :w="23" /><span v-fit="62">Search</span><Ico n="basket" :w="69" ht="37" vb="0 0 69 37" class="basket" /></div>
      <Ico n="taskView" :w="36" ht="34" vb="0 0 36 34" class="tv" />
      <div class="teams"><Ico n="teams" :w="36" ht="32" vb="0 0 36 32" /><span class="tbadge">2</span></div>
      <Ico n="copilot" :w="36" ht="33" vb="0 0 36 33" class="cop" />
      <Ico n="mcafee" :w="32" ht="36" vb="0 0 32 36" class="mca" />
      <div class="chromeapp"><Ico n="chrome" :w="36" vb="0 0 36 36" /><span class="cbadge">D</span><i></i></div>
      <div class="app exp"><Ico n="explorer" :w="36" ht="32" vb="0 0 36 32" /><i></i></div>
      <div class="app acr"><Ico n="acrobat" :w="34" ht="32" vb="0 0 34 32" /><i></i></div>
      <div class="tray">
        <svg width="17" height="11" class="traychev"><path d="M1 10 8.500 2 16 10" fill="none" stroke="#222" stroke-width="1.800" /></svg>
        <Ico n="oneDrive" :w="26" class="od" />
        <div class="lang"><span>ENG</span><span>IN</span></div>
        <Ico n="wifi" :w="25" ht="23" class="wf" /><Ico n="volume" :w="25" class="vo" /><Ico n="battery" :w="26" class="ba" />
        <div class="clock"><span v-fit="64">5:07 PM</span><span v-fit="83">6/18/2025</span></div>
        <Ico n="bell" :w="22" ht="25" />
      </div>
    </footer>
  </div>
</template>

<style>
body { margin: 0; overflow: hidden; }
</style>

<style scoped>
.screen { width: 1920px; height: 1080px; display: flex; flex-direction: column; overflow: hidden; font-family: "Noto Sans", "Open Sans", sans-serif; background: #fff; }
.screen * { box-sizing: border-box; }
svg { flex: none; display: block; }
span { white-space: nowrap; }

.tabstrip { height: 60px; flex: none; display: flex; background: #d3e3fd; font-family: "Open Sans", sans-serif; color: #45484b; }
.tabsearch { width: 42px; height: 42px; margin: 9px 6px 0 9px; border-radius: 14px; background: #ebf2fe; color: #1f1f1f; display: flex; align-items: center; justify-content: center; }
.tab { width: 114px; height: 60px; display: flex; align-items: center; padding-left: 15px; position: relative; font-size: 18px; }
.tab:not(.active):not(.nosep)::after { content: ""; position: absolute; right: 0; top: 18px; width: 3px; height: 24px; border-radius: 2px; background: #a8c7fa; }
.tabname { margin-left: 12px; width: 50px; line-height: 30px; padding-top: 3px; -webkit-mask-image: linear-gradient(90deg, #000 24px, transparent 46px); mask-image: linear-gradient(90deg, #000 24px, transparent 46px); }
.tab.active { height: 51px; margin: 9px 6px 0 3px; width: 105px; background: #fff; border-radius: 14px 14px 0 0; padding: 0 0 9px 12px; color: #1f1f1f; }
.active .tabname { width: 20px; margin-left: 11px; mask-image: none; -webkit-mask-image: none; }
.active::before { content: ""; position: absolute; left: -14px; bottom: 0; width: 133px; height: 14px; background: radial-gradient(circle at 0 0, transparent 14px, #fff 14.500px) left/14px 14px no-repeat, radial-gradient(circle at 100% 0, transparent 14px, #fff 14.500px) right/14px 14px no-repeat; }
.tabclose { margin-left: 6px; }
.tabgroup { display: flex; position: relative; }
.tabgroup::after { content: ""; position: absolute; left: 12px; width: 137px; bottom: 0; height: 3px; border-radius: 2px 2px 0 0; background: #5f6368; }
.groupchip { width: 30px; height: 30px; margin: 15px 12px 0 9px; border-radius: 8px; background: #5f6368; }
.newtab { width: 113px; }
.addtab { margin: 20px 0 0 14px; color: #333; }
.wincontrols { flex: 1; display: flex; justify-content: flex-end; gap: 48px; padding: 18px 23px 0 0; color: #111; }
.wincontrols svg:first-child { margin: 2px 1px 0 0; }

.chrome { height: 122px; flex: none; background: #fff; position: relative; border-bottom: 1px solid #dadce0; color: #3c4043; }
.chrome::before, .chrome::after { content: ""; position: absolute; top: 0; width: 12px; height: 12px; }
.chrome::before { left: 0; background: radial-gradient(circle at 100% 100%, transparent 12px, #d3e3fd 12.500px); }
.chrome::after { right: 0; background: radial-gradient(circle at 0 100%, transparent 12px, #d3e3fd 12.500px); }
.navrow { display: flex; align-items: center; height: 69px; padding-left: 20px; gap: 28px; }
.dim { color: #a5a7a9; }
.reload { margin-left: -1px; }
.omnibox { width: 1479px; height: 51px; margin-left: -2px; border-radius: 26px; background: #ecf0fa; display: flex; align-items: center; padding-left: 7px; }
.siteinfo { width: 37px; height: 37px; border-radius: 50%; background: #fff; display: flex; align-items: center; justify-content: center; color: #222; }
.url { margin-left: 11px; flex: 1; font: 20px "Open Sans", sans-serif; color: #474747; }
.url b { font-weight: 400; color: #1f1f1f; }
.bookstar { margin-right: 22px; }
.ext { margin-right: 4px; }
.vsep { width: 3px; height: 24px; border-radius: 2px; background: #d3e3fd; flex: none; margin-left: -7px; }
.profile { width: 30px; height: 30px; border-radius: 50%; background: #512da8; color: #fff; font: 15px/30px Roboto, sans-serif; text-align: center; margin-left: -2px; }
.kebab { color: #474747; }
.bookrow { display: flex; align-items: center; height: 42px; padding: 0 22px 0 9px; }
.bookchip { width: 30px; height: 30px; border: 1.500px solid #5f6368; border-radius: 9px; padding: 5px; background: #f1f3f4; }
.bookchip i { display: block; width: 18px; height: 18px; border-radius: 4px; background: #5f6368; }
.gridicon { margin-left: 21px; }
.bsep { margin-left: auto; margin-right: 24px; }
.allbm { font: 18px "Open Sans", sans-serif; color: #474747; margin: -1px 0 0 11px; width: 113px; }

.topbar { height: 60px; flex: none; background: #1b222c; display: flex; align-items: center; color: #fff; font-weight: 600; font-size: 22px; border-bottom: 1px solid #2f3a4c; }
.cell { height: 59px; display: flex; align-items: center; border-left: 1px solid #2f3a4c; }
.cell span { padding-bottom: 2px; }
.menu { width: 137px; border: 0; padding-left: 16px; gap: 6px; }
.homecell { width: 68px; border-right: 1px solid #2f3a4c; padding-left: 19px; }
.upgrade { width: 124px; height: 36px; margin-left: 18px; border-radius: 18px; background: #098842; padding-left: 18px; line-height: 35px; }
.title { margin: -6px 0 0 119px; width: 387px; color: #afb5c0; font-size: 23px; }
.user { margin-left: 120px; margin-right: 13px; width: 35px; height: 36px; border-radius: 6px; background: #259cda; text-align: center; font-weight: 400; line-height: 36px; font-size: 23px; flex: none; }
.action { flex: none; }
.raised { padding-bottom: 4px; }
.laychev { margin-left: 13px; }

.workspace { height: 766px; flex: none; display: flex; background: #2f3a4c; }
.sidebar { width: 426px; display: flex; flex-direction: column; }
.treebar { height: 48px; flex: none; display: flex; align-items: center; padding: 0 13px 0 13px; color: #d3d6dc; }
.treebar svg:nth-child(2) { margin-left: 6px; }
.up { margin-left: 7px; }
.grow { flex: 1; }
.pen { margin-left: 5px; }
.bin { margin: 0 0 0 9px; }
.treewrap { height: 662px; display: flex; }
.tree { width: 403px; background: #495365; overflow: hidden; }
.row { height: 43.100px; display: flex; align-items: center; color: #fff; font-size: 21px; }
.row:first-child { margin-top: -21.500px; }
.fname { margin-left: 8px; line-height: 43px; }
.gray { color: #afb5c0; }
.folderrow { padding-left: 18px; }
.folderrow .gray { margin-left: 7px; }
.folderrow .fname { margin-left: 5px; }
.twist { color: #afb5c0; margin: 0 1px; }
.twist.right { margin: -5px 0 0; }
.filerow { padding-left: 55.500px; }
.fileic { margin-right: -2px; }
.selected { background: #098842; font-weight: 700; }
.selected .gray, .selected .rowmore { color: #fff; }
.rowmore { margin-left: 105px; }
.rootrow { padding-left: 18px; }
.vscroll { width: 23px; background: #fcfcfc; display: flex; flex-direction: column; align-items: center; padding: 6px 0; justify-content: space-between; }
.thumb { width: 13px; height: 409px; border-radius: 7px; background: #8b8b8b; margin: 0 0 174px; }
.hgrip { height: 11px; background: #3c4457; display: flex; justify-content: center; gap: 3px; padding: 2px 0 0; border-bottom: 1px solid #4d566a; }
.hgrip i { width: 4px; height: 5px; background: #7c8493; }
.outline { flex: 1; background: #3c4457; display: flex; align-items: center; padding: 0 0 2px 9px; gap: 10px; color: #a3a8b3; font-weight: 600; font-size: 21px; }

.resizer { position: relative; z-index: 2; flex: none; display: flex; flex-direction: column; align-items: center; padding-top: 193px; }
.left { width: 10px; }
.mid { width: 11px; }
.grip { display: flex; flex-direction: column; gap: 3px; height: 28px; margin-left: 1px; }
.grip i { width: 4.500px; height: 4.500px; background: #aeb4bf; }
.collapse { width: 100%; height: 75px; margin: 128px 0 151px; background: #848b99; color: #fff; display: flex; align-items: center; justify-content: center; }
.sync { position: absolute; left: -12px; width: 36px; height: 36px; border-radius: 50%; color: #fff; display: flex; align-items: center; justify-content: center; }
.first { top: 103px; background: rgba(103, 110, 128, 0.68); }
.second { top: 157px; background: #636b7e; }

.preview { width: 638px; flex: none; background: #f4f5f6; display: flex; flex-direction: column; align-items: center; padding-top: 18px; }
.download { width: 210px; height: 56px; border: 1px solid #677283; border-radius: 28px; background: #fff; display: flex; align-items: center; padding: 0 0 1px 25px; font: 600 24px "Noto Sans", sans-serif; color: #1b222c; }
.download span { margin: -1px 0 0 13px; }
.picture { width: 602px; height: 325px; margin-top: 18px; border: 1px solid #677283; background: #fff; box-shadow: 0 3px 7px rgba(30, 37, 48, 0.5); }
.picture svg { margin: -1px; }
.figure { font-family: "Liberation Sans", Arial, sans-serif; fill: #222; }

.pdf { width: 835px; display: flex; flex-direction: column; }
.pdfbar { height: 48px; flex: none; display: flex; align-items: center; color: #fff; font-size: 21px; }
.recompile { width: 229px; height: 42px; margin-top: 1px; border-radius: 0 21px 21px 0; background: #098842; display: flex; font-weight: 600; font-size: 23px; }
.rc { width: 169px; padding-left: 24px; line-height: 41px; border-right: 1px solid #0b6f3a; }
.rcmenu { padding: 11px 0 0 17px; }
.logs { position: relative; margin-left: 15px; width: 28px; height: 30px; }
.badge { position: absolute; left: -1px; top: -8px; width: 28px; height: 25px; border-radius: 5px; background: #b83a33; font-size: 16px; line-height: 24px; text-align: center; }
.pdfdl { margin-left: 10px; }
.pgup { margin-left: 123px; }
.pgdown { margin-left: 26px; }
.pagebox { margin-left: 19px; width: 47px; height: 35px; border-radius: 5px; background: #fff; color: #111; text-align: center; line-height: 35px; }
.pages { margin-left: 8px; width: 24px; margin-top: -1px; }
.pdfsep { width: 1px; height: 36px; margin-left: 12px; background: #424d60; }
.zout { margin-left: 21px; }
.zin { margin-left: 26px; }
.zoom { margin: -1px 0 0 35px; width: 54px; }
.caret { margin-left: 5px; }
.pdfbody { height: 696px; flex: none; display: flex; background: #fff; width: 825px; }
.page { width: 802px; overflow: hidden; border-top: 2px solid #b1b1b1; position: relative; padding-top: 102px; }
.pagefig { margin-left: 26px; }
.caption, .para { font-family: "Liberation Serif", "Times New Roman", serif; font-size: 21.500px; color: #000; margin: 0; }
.caption { margin: 7px 0 0 82px; line-height: 27px; }
.para { width: 682px; margin: 57px 0 0 -6px; }
.para p { margin: 0; height: 27.150px; line-height: 27.150px; display: flex; justify-content: flex-end; }
.edge { position: absolute; left: 0; width: 1px; }
.orange { top: 158px; height: 94px; background: #f3cf98; }
.blue { top: 406px; height: 6px; background: #2b6cb8; }
.pv { padding: 7px 0 5px; }
.pv .thumb { height: 47px; margin: 0 0 169px; width: 12px; }
.hscroll { height: 22px; width: 825px; background: #fcfcfc; display: flex; align-items: center; padding-left: 6px; }
.hthumb { width: 490px; height: 13px; border-radius: 7px; background: #8b8b8b; margin: 0 11px 0 268px; }

.taskbar { height: 72px; flex: none; display: flex; border-top: 2px solid #b9aeab; font-family: "Open Sans", sans-serif; font-size: 17.500px; color: #1c1c1c; background: linear-gradient(90deg, #dbdbdc 0, #e9dbd2 110px, #f1dcd4 240px, #f9ddd8 340px, #f3d7d6 600px, #f2d3d8 740px, #efdccf 880px, #f3e2d1 1030px, #ecdcd1 1190px, #ead7d6 1320px, #f0d9d8 1510px, #eddadb 1620px, #dbdbe2 1720px, #d9dbe1 1920px); }
.weather { width: 540px; display: flex; padding: 0 0 0 29px; }
.wicon { position: relative; padding-top: 15px; width: 37px; }
.wicon svg { margin-top: 1px; }
.wbadge { position: absolute; left: 16px; top: 7px; width: 24px; height: 24px; border-radius: 50%; background: #c42b1c; color: #fff; text-align: center; line-height: 23px; }
.wtext { display: flex; flex-direction: column; align-items: flex-start; margin-left: 10px; padding-top: 9px; line-height: 24px; }
.soft { color: #655b58; }
.start { margin-top: 17px; }
.search { width: 327px; height: 46px; margin: 11px 0 0 21px; border-radius: 23px; background: #fbf2f1; border: 1.500px solid #dbc3c1; border-bottom-color: #bfa9a8; display: flex; align-items: center; padding-left: 16px; font-size: 19px; color: #5d5858; }
.search span { margin-left: 15px; }
.basket { margin: 0 7px 0 auto; }
.tv { margin: 17px 0 0 20px; }
.teams { position: relative; margin: 13px 0 0 30px; height: 36px; }
.tbadge, .cbadge { position: absolute; width: 24px; height: 24px; border-radius: 50%; color: #fff; text-align: center; line-height: 24px; }
.tbadge { left: 20px; top: -4px; background: #0078d4; }
.cop { margin: 17px 0 0 30px; }
.mca { margin: 16px 0 0 32px; }
.chromeapp { position: relative; width: 56px; height: 57px; margin: 6px 0 0 22px; border-radius: 6px; background: rgba(255, 255, 255, 0.6); box-shadow: 0 1px 2px rgba(100, 80, 80, 0.25); display: flex; flex-direction: column; align-items: center; padding-top: 10px; }
.chromeapp i { width: 24px; height: 5px; border-radius: 3px; background: #0078d4; margin-top: 6px; }
.cbadge { left: 30px; top: 3px; background: #512da8; font-size: 14px; color: #d9d2f0; }
.app { display: flex; flex-direction: column; align-items: center; padding-top: 18px; }
.app i { width: 9px; height: 5px; border-radius: 3px; background: #857b7b; margin-top: 8px; }
.exp { margin-left: 20px; }
.acr { margin-left: 31px; padding-top: 17px; }
.acr i { margin-top: 9px; }
.tray { flex: 1; display: flex; padding-left: 118px; align-items: flex-start; }
.traychev { margin-top: 28px; }
.od { margin: 22px 0 0 28px; }
.lang { width: 40px; margin: 12px 0 0 23px; text-align: center; display: flex; flex-direction: column; line-height: 22.500px; font-size: 17px; letter-spacing: -0.400px; }
.wf { margin: 23px 0 0 25px; }
.vo { margin: 22px 0 0 11px; }
.ba { margin: 21px 0 0 10px; }
.clock { width: 84px; margin: 10px 14px 0 23px; display: flex; flex-direction: column; align-items: flex-end; line-height: 24px; }
.tray > svg:last-child { margin-top: 23px; }
</style>
